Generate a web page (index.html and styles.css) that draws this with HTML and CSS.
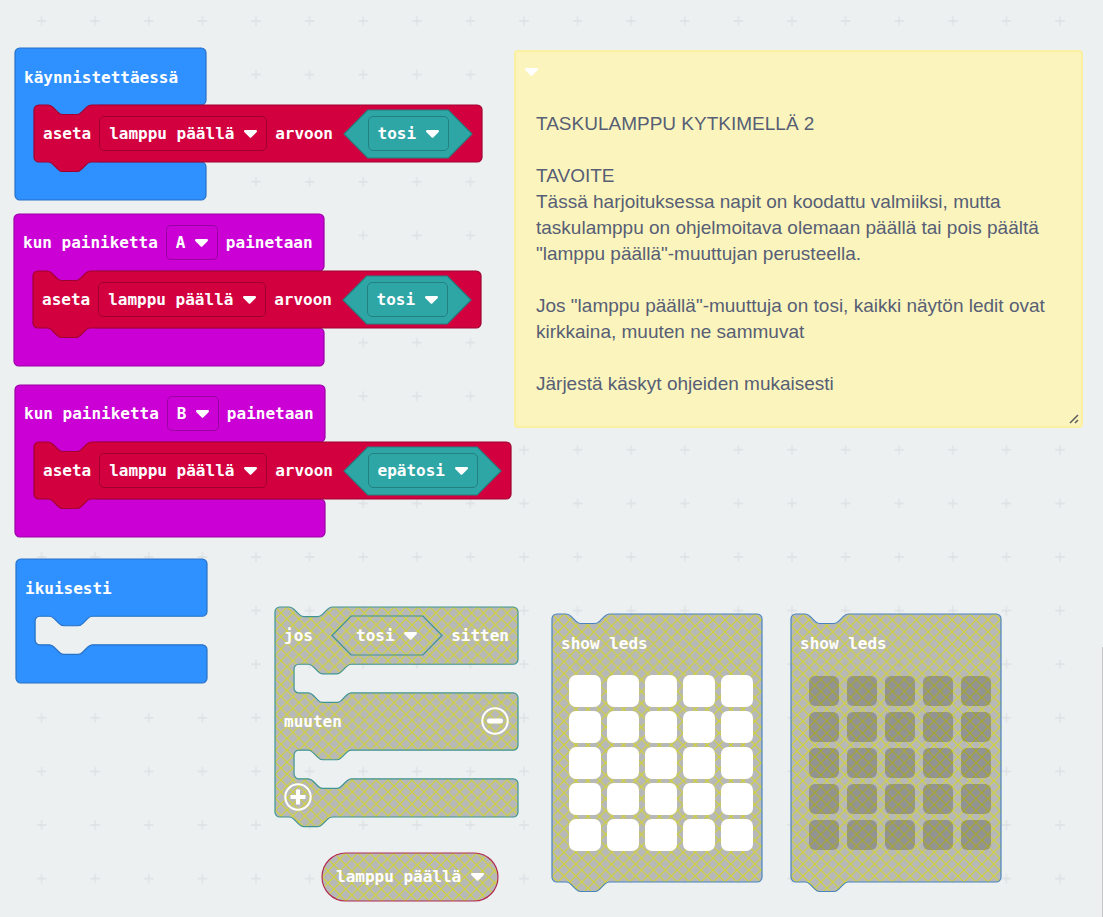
FILE: index.html
```html
<!DOCTYPE html>
<html lang="fi">
<head>
<meta charset="utf-8">
<title>Taskulamppu kytkimellä 2</title>
<link rel="stylesheet" href="styles.css">
</head>
<body>
<svg class="defs" aria-hidden="true">
  <defs>
    <pattern id="hatch" width="10" height="10" patternUnits="userSpaceOnUse">
      <rect width="10" height="10" fill="#aaa"/>
      <path d="M0,0L10,10M10,0L0,10" stroke="#cc0" stroke-width="1"/>
    </pattern>
    <symbol id="arrow" viewBox="0 0 13 8">
      <path fill="#fff" d="M1.3 0H11.7Q13 0 13 1Q13 1.7 12.5 2.2L7.5 7.3Q6.5 8.3 5.5 7.3L.5 2.2Q0 1.7 0 1Q0 0 1.3 0Z"/>
    </symbol>
  </defs>
</svg>
<main class="workspace">
  <svg class="grid" aria-hidden="true">
    <defs>
      <pattern id="crosses" x="14.8" y="-5.8" width="53.6" height="53.6" patternUnits="userSpaceOnUse">
        <path d="M22 26.8H31.6M26.8 22V31.6" stroke="#dde1e3" stroke-width="1.4"/>
      </pattern>
    </defs>
    <rect width="100%" height="100%" fill="url(#crosses)"/>
  </svg>

  <section class="block hat basic start">
    <svg class="shape" viewBox="0 0 160 128" preserveAspectRatio="none"><path d="M0,4A4,4 0 0 1 4,0H156a4,4 0 0 1 4,4V44a4,4 0 0 1 -4,4H70V96H156a4,4 0 0 1 4,4V124a4,4 0 0 1 -4,4H4a4,4 0 0 1 -4,-4z"/></svg>
    <div class="row"><span>käynnistettäessä</span></div>
    <div class="statement">
      <svg class="shape" viewBox="0 0 376 48" preserveAspectRatio="none"><path d="M0,4A4,4 0 0 1 4,0H12c2,0 3,1 4,2l4,4c1,1 2,2 4,2h12c2,0 3,-1 4,-2l4,-4c1,-1 2,-2 4,-2H372a4,4 0 0 1 4,4V44a4,4 0 0 1 -4,4H48c-2,0 -3,1 -4,2l-4,4c-1,1 -2,2 -4,2h-12c-2,0 -3,-1 -4,-2l-4,-4c-1,-1 -2,-2 -4,-2H4a4,4 0 0 1 -4,-4z"/></svg>
      <span>aseta</span>
      <label class="field"><select aria-label="muuttuja"><option>lamppu päällä</option></select><svg class="arrow"><use href="#arrow"/></svg></label>
      <span>arvoon</span>
      <div class="value">
        <svg class="shape" viewBox="0 0 108 40" preserveAspectRatio="none"><path d="M20,0H88L108,20L88,40H20L0,20z"/></svg>
        <label class="field"><select aria-label="arvo"><option>tosi</option></select><svg class="arrow"><use href="#arrow"/></svg></label>
      </div>
    </div>
  </section>

  <section class="block hat input button-a">
    <svg class="shape" viewBox="0 0 260 128" preserveAspectRatio="none"><path d="M0,4A4,4 0 0 1 4,0H256a4,4 0 0 1 4,4V44a4,4 0 0 1 -4,4H70V96H256a4,4 0 0 1 4,4V124a4,4 0 0 1 -4,4H4a4,4 0 0 1 -4,-4z"/></svg>
    <div class="row"><span>kun painiketta</span>
      <label class="field"><select aria-label="painike"><option>A</option></select><svg class="arrow"><use href="#arrow"/></svg></label>
      <span>painetaan</span></div>
    <div class="statement">
      <svg class="shape" viewBox="0 0 376 48" preserveAspectRatio="none"><path d="M0,4A4,4 0 0 1 4,0H12c2,0 3,1 4,2l4,4c1,1 2,2 4,2h12c2,0 3,-1 4,-2l4,-4c1,-1 2,-2 4,-2H372a4,4 0 0 1 4,4V44a4,4 0 0 1 -4,4H48c-2,0 -3,1 -4,2l-4,4c-1,1 -2,2 -4,2h-12c-2,0 -3,-1 -4,-2l-4,-4c-1,-1 -2,-2 -4,-2H4a4,4 0 0 1 -4,-4z"/></svg>
      <span>aseta</span>
      <label class="field"><select aria-label="muuttuja"><option>lamppu päällä</option></select><svg class="arrow"><use href="#arrow"/></svg></label>
      <span>arvoon</span>
      <div class="value">
        <svg class="shape" viewBox="0 0 108 40" preserveAspectRatio="none"><path d="M20,0H88L108,20L88,40H20L0,20z"/></svg>
        <label class="field"><select aria-label="arvo"><option>tosi</option></select><svg class="arrow"><use href="#arrow"/></svg></label>
      </div>
    </div>
  </section>

  <section class="block hat input button-b">
    <svg class="shape" viewBox="0 0 260 128" preserveAspectRatio="none"><path d="M0,4A4,4 0 0 1 4,0H256a4,4 0 0 1 4,4V44a4,4 0 0 1 -4,4H70V96H256a4,4 0 0 1 4,4V124a4,4 0 0 1 -4,4H4a4,4 0 0 1 -4,-4z"/></svg>
    <div class="row"><span>kun painiketta</span>
      <label class="field"><select aria-label="painike"><option>B</option></select><svg class="arrow"><use href="#arrow"/></svg></label>
      <span>painetaan</span></div>
    <div class="statement wide">
      <svg class="shape" viewBox="0 0 400 48" preserveAspectRatio="none"><path d="M0,4A4,4 0 0 1 4,0H12c2,0 3,1 4,2l4,4c1,1 2,2 4,2h12c2,0 3,-1 4,-2l4,-4c1,-1 2,-2 4,-2H396a4,4 0 0 1 4,4V44a4,4 0 0 1 -4,4H48c-2,0 -3,1 -4,2l-4,4c-1,1 -2,2 -4,2h-12c-2,0 -3,-1 -4,-2l-4,-4c-1,-1 -2,-2 -4,-2H4a4,4 0 0 1 -4,-4z"/></svg>
      <span>aseta</span>
      <label class="field"><select aria-label="muuttuja"><option>lamppu päällä</option></select><svg class="arrow"><use href="#arrow"/></svg></label>
      <span>arvoon</span>
      <div class="value">
        <svg class="shape" viewBox="0 0 132 40" preserveAspectRatio="none"><path d="M20,0H112L132,20L112,40H20L0,20z"/></svg>
        <label class="field"><select aria-label="arvo"><option>epätosi</option></select><svg class="arrow"><use href="#arrow"/></svg></label>
      </div>
    </div>
  </section>

  <section class="block basic forever">
    <svg class="shape" viewBox="0 0 160 104" preserveAspectRatio="none"><path d="M0,4A4,4 0 0 1 4,0H156a4,4 0 0 1 4,4V44a4,4 0 0 1 -4,4H64c-2,0 -3,1 -4,2l-4,4c-1,1 -2,2 -4,2h-12c-2,0 -3,-1 -4,-2l-4,-4c-1,-1 -2,-2 -4,-2H20a4,4 0 0 0 -4,4V68a4,4 0 0 0 4,4H28c2,0 3,1 4,2l4,4c1,1 2,2 4,2h12c2,0 3,-1 4,-2l4,-4c1,-1 2,-2 4,-2H156a4,4 0 0 1 4,4V100a4,4 0 0 1 -4,4H4a4,4 0 0 1 -4,-4z"/></svg>
    <div class="row"><span>ikuisesti</span></div>
  </section>

  <section class="block disabled condition">
    <svg class="shape" viewBox="0 0 204 176" preserveAspectRatio="none"><path d="M0,4A4,4 0 0 1 4,0H12c2,0 3,1 4,2l4,4c1,1 2,2 4,2h12c2,0 3,-1 4,-2l4,-4c1,-1 2,-2 4,-2H200a4,4 0 0 1 4,4V44a4,4 0 0 1 -4,4H64c-2,0 -3,1 -4,2l-4,4c-1,1 -2,2 -4,2h-12c-2,0 -3,-1 -4,-2l-4,-4c-1,-1 -2,-2 -4,-2H20a4,4 0 0 0 -4,4V68a4,4 0 0 0 4,4H28c2,0 3,1 4,2l4,4c1,1 2,2 4,2h12c2,0 3,-1 4,-2l4,-4c1,-1 2,-2 4,-2H200a4,4 0 0 1 4,4V116a4,4 0 0 1 -4,4H64c-2,0 -3,1 -4,2l-4,4c-1,1 -2,2 -4,2h-12c-2,0 -3,-1 -4,-2l-4,-4c-1,-1 -2,-2 -4,-2H20a4,4 0 0 0 -4,4V140a4,4 0 0 0 4,4H28c2,0 3,1 4,2l4,4c1,1 2,2 4,2h12c2,0 3,-1 4,-2l4,-4c1,-1 2,-2 4,-2H200a4,4 0 0 1 4,4V172a4,4 0 0 1 -4,4H48c-2,0 -3,1 -4,2l-4,4c-1,1 -2,2 -4,2h-12c-2,0 -3,-1 -4,-2l-4,-4c-1,-1 -2,-2 -4,-2H4a4,4 0 0 1 -4,-4z"/></svg>
    <div class="row spread"><span>jos</span>
      <div class="value small">
        <svg class="shape" viewBox="0 0 92 32" preserveAspectRatio="none"><path d="M16,0H76L92,16L76,32H16L0,16z"/></svg>
        <label class="field"><select aria-label="ehto"><option>tosi</option></select><svg class="arrow"><use href="#arrow"/></svg></label>
      </div>
      <span>sitten</span></div>
    <div class="slot"></div>
    <div class="row spread"><span>muuten</span>
      <button class="round" aria-label="Poista haara"><svg viewBox="0 0 28 28"><circle cx="14" cy="14" r="12.7" fill="none" stroke="#fff" stroke-width="2"/><path d="M8.3 14H19.7" stroke="#fff" stroke-width="4.8" stroke-linecap="round"/></svg></button></div>
    <div class="slot"></div>
    <div class="row foot">
      <button class="round" aria-label="Lisää haara"><svg viewBox="0 0 28 28"><circle cx="14" cy="14" r="12.7" fill="none" stroke="#fff" stroke-width="2"/><path d="M7.6 14H20.4M14 7.6V20.4" stroke="#fff" stroke-width="4.8" stroke-linecap="square" stroke-dasharray="none" transform="translate(2.1 2.1) scale(.85)"/></svg></button></div>
  </section>

  <section class="block disabled leds leds-on">
    <svg class="shape" viewBox="0 0 176 225" preserveAspectRatio="none"><path d="M0,4A4,4 0 0 1 4,0H12c2,0 3,1 4,2l4,4c1,1 2,2 4,2h12c2,0 3,-1 4,-2l4,-4c1,-1 2,-2 4,-2H172a4,4 0 0 1 4,4V221a4,4 0 0 1 -4,4H48c-2,0 -3,1 -4,2l-4,4c-1,1 -2,2 -4,2h-12c-2,0 -3,-1 -4,-2l-4,-4c-1,-1 -2,-2 -4,-2H4a4,4 0 0 1 -4,-4z"/></svg>
    <div class="row"><span>show leds</span></div>
    <div class="matrix">
      <input type="checkbox" aria-label="0,0" checked><input type="checkbox" aria-label="1,0" checked><input type="checkbox" aria-label="2,0" checked><input type="checkbox" aria-label="3,0" checked><input type="checkbox" aria-label="4,0" checked>
      <input type="checkbox" aria-label="0,1" checked><input type="checkbox" aria-label="1,1" checked><input type="checkbox" aria-label="2,1" checked><input type="checkbox" aria-label="3,1" checked><input type="checkbox" aria-label="4,1" checked>
      <input type="checkbox" aria-label="0,2" checked><input type="checkbox" aria-label="1,2" checked><input type="checkbox" aria-label="2,2" checked><input type="checkbox" aria-label="3,2" checked><input type="checkbox" aria-label="4,2" checked>
      <input type="checkbox" aria-label="0,3" checked><input type="checkbox" aria-label="1,3" checked><input type="checkbox" aria-label="2,3" checked><input type="checkbox" aria-label="3,3" checked><input type="checkbox" aria-label="4,3" checked>
      <input type="checkbox" aria-label="0,4" checked><input type="checkbox" aria-label="1,4" checked><input type="checkbox" aria-label="2,4" checked><input type="checkbox" aria-label="3,4" checked><input type="checkbox" aria-label="4,4" checked>
    </div>
  </section>

  <section class="block disabled leds leds-off">
    <svg class="shape" viewBox="0 0 176 225" preserveAspectRatio="none"><path d="M0,4A4,4 0 0 1 4,0H12c2,0 3,1 4,2l4,4c1,1 2,2 4,2h12c2,0 3,-1 4,-2l4,-4c1,-1 2,-2 4,-2H172a4,4 0 0 1 4,4V221a4,4 0 0 1 -4,4H48c-2,0 -3,1 -4,2l-4,4c-1,1 -2,2 -4,2h-12c-2,0 -3,-1 -4,-2l-4,-4c-1,-1 -2,-2 -4,-2H4a4,4 0 0 1 -4,-4z"/></svg>
    <div class="row"><span>show leds</span></div>
    <div class="matrix">
      <input type="checkbox" aria-label="0,0"><input type="checkbox" aria-label="1,0"><input type="checkbox" aria-label="2,0"><input type="checkbox" aria-label="3,0"><input type="checkbox" aria-label="4,0">
      <input type="checkbox" aria-label="0,1"><input type="checkbox" aria-label="1,1"><input type="checkbox" aria-label="2,1"><input type="checkbox" aria-label="3,1"><input type="checkbox" aria-label="4,1">
      <input type="checkbox" aria-label="0,2"><input type="checkbox" aria-label="1,2"><input type="checkbox" aria-label="2,2"><input type="checkbox" aria-label="3,2"><input type="checkbox" aria-label="4,2">
      <input type="checkbox" aria-label="0,3"><input type="checkbox" aria-label="1,3"><input type="checkbox" aria-label="2,3"><input type="checkbox" aria-label="3,3"><input type="checkbox" aria-label="4,3">
      <input type="checkbox" aria-label="0,4"><input type="checkbox" aria-label="1,4"><input type="checkbox" aria-label="2,4"><input type="checkbox" aria-label="3,4"><input type="checkbox" aria-label="4,4">
    </div>
  </section>

  <section class="block disabled variable">
    <svg class="shape" viewBox="0 0 148 40" preserveAspectRatio="none"><path d="M20,0H128a20,20 0 0 1 0,40H20a20,20 0 0 1 0,-40z"/></svg>
    <label class="field"><select aria-label="muuttuja"><option>lamppu päällä</option></select><svg class="arrow"><use href="#arrow"/></svg></label>
  </section>

  <aside class="note">
    <button class="collapse" aria-label="Pienennä kommentti"><svg class="arrow"><use href="#arrow"/></svg></button>
    <textarea aria-label="Kommentti" rows="11" spellcheck="false">TASKULAMPPU KYTKIMELLÄ 2

TAVOITE
Tässä harjoituksessa napit on koodattu valmiiksi, mutta taskulamppu on ohjelmoitava olemaan päällä tai pois päältä "lamppu päällä"-muuttujan perusteella.

Jos "lamppu päällä"-muuttuja on tosi, kaikki näytön ledit ovat kirkkaina, muuten ne sammuvat

Järjestä käskyt ohjeiden mukaisesti</textarea>
    <svg class="resize" viewBox="0 0 10 10"><path d="M1 9L9 1M6 9L9 6" stroke="#5a5a5a" stroke-width="1.5"/></svg>
  </aside>
  <div class="scrollbar"></div>
</main>
</body>
</html>
```
FILE: styles.css
```css
* { box-sizing: border-box; }
body {
  margin: 0;
  background: #ecf0f1;
  font: bold 16px/20px "DejaVu Sans Mono", monospace;
  color: #fff;
}
.defs { position: absolute; width: 0; height: 0; }
.workspace { position: relative; min-height: 100vh; overflow: hidden; }
.grid { position: absolute; inset: 0; width: 100%; height: 100%; }

/* Blocks sit on a free canvas; everything inside them flows. */
.block { position: absolute; white-space: nowrap; }
.shape {
  position: absolute;
  inset: 0;
  width: 100%;
  height: 100%;
  overflow: visible;
  z-index: -1;
}
.shape path { fill: var(--fill); stroke: var(--edge); stroke-width: 1; }
.block, .statement, .value { isolation: isolate; }

.basic { --fill: #2f91ff; --edge: #2771c6; }
.input { --fill: #cb00d5; --edge: #9b00a4; }
.statement { --fill: #d3003f; --edge: #9f0030; }
.value { --fill: #2fa6a6; --edge: #248080; }

.start { left: 15px; top: 48px; width: 191px; }
.button-a { left: 14px; top: 214px; width: 310px; }
.button-b { left: 15px; top: 385px; width: 310px; }
.forever { left: 16px; top: 559px; width: 191px; height: 124px; }
.condition { left: 275px; top: 607px; width: 243px; --edge: #3f9494; }
.leds { top: 614px; width: 210px; height: 268px; --edge: #4a84c0; }
.leds-on { left: 552px; }
.leds-off { left: 791px; }
.variable { left: 322px; top: 853px; width: 176px; height: 48px; --edge: #b02a52; }

.hat { padding-bottom: 38px; }
.row { display: flex; align-items: center; gap: 8px; height: 57px; padding: 0 9px; }
.start .row, .forever .row, .leds .row { padding-top: 2px; }
.spread { justify-content: space-between; }
.foot { height: 38px; }
.slot { height: 29px; }

.statement {
  position: relative;
  display: flex;
  align-items: center;
  gap: 8px;
  width: 448px;
  height: 57px;
  margin-left: 19px;
  padding: 0 10px 0 9px;
}
.statement.wide { width: 477px; }
.statement .value { margin-left: auto; }
.value {
  position: relative;
  display: flex;
  align-items: center;
  justify-content: center;
  flex: none;
  width: 128px;
  height: 48px;
}
.wide .value { width: 157px; }
.value.small { width: 110px; height: 39px; margin-left: 9px; }

.field {
  display: flex;
  align-items: center;
  gap: 9px;
  height: 35px;
  padding: 0 9px;
  border: 1px solid var(--edge);
  border-radius: 5px;
}
select {
  appearance: none;
  margin: 0;
  padding: 0;
  border: 0;
  background: none;
  color: #fff;
  font: inherit;
}
.arrow { display: block; flex: none; width: 13px; height: 8px; }

.disabled .shape path { fill: url(#hatch); fill-opacity: .8; }
.disabled .value .shape path { fill: none; }
.disabled .field { border-color: transparent; }
.disabled .value { --edge: #3f9494; }
.variable { display: flex; align-items: center; justify-content: center; }

.round { width: 28px; height: 28px; margin-bottom: 2px; padding: 0; border: 0; background: none; }
.round svg { display: block; }

.matrix {
  display: grid;
  grid-template-columns: repeat(5, 30px);
  gap: 6px 8px;
  padding: 5px 18px;
}
.matrix input {
  appearance: none;
  width: 30px;
  height: 30px;
  margin: 0;
  border-radius: 6px;
  background: rgba(0, 0, 0, .2);
}
.matrix input:checked { background: #fff; box-shadow: 0 0 0 1px #fff; }

.note {
  position: absolute;
  left: 514px;
  right: 20px;
  top: 50px;
  padding: 16px 20px 29px 9px;
  border: 2px solid #faf0a0;
  border-radius: 4px;
  background: #fbf5bd;
}
.collapse { display: block; padding: 0; border: 0; background: none; }
.note textarea {
  display: block;
  width: 100%;
  margin-top: 35px;
  padding: 0 0 0 11px;
  border: 0;
  outline: 0;
  resize: none;
  overflow: hidden;
  background: none;
  color: #575e75;
  font: 19px/26px "Liberation Sans", Arial, sans-serif;
}
.resize { position: absolute; right: 2px; bottom: 2px; width: 10px; height: 10px; }
.scrollbar { position: absolute; right: 0; top: 647px; bottom: 0; width: 1px; background: #c4c6c8; }
```
